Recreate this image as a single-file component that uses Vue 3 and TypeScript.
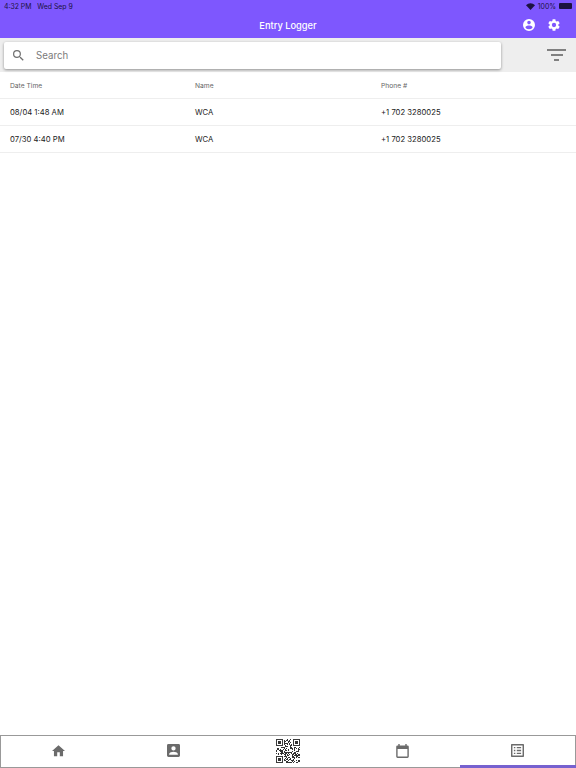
<script setup lang="ts">
interface Entry {
  time: string;
  name: string;
  phone: string;
}

const entries: Entry[] = [
  { time: "08/04 1:48 AM", name: "WCA", phone: "+1 702 3280025" },
  { time: "07/30 4:40 PM", name: "WCA", phone: "+1 702 3280025" },
];

// pseudo random modules, the real code is too blurry to read anyway
const qrSize = 25;
const qrCells: { x: number; y: number }[] = [];
let seed = 7;
for (let y = 0; y < qrSize; y++) {
  for (let x = 0; x < qrSize; x++) {
    seed = (seed * 137 + 59) % 1009;
    const inFinder = (x < 8 && y < 8) || (x > 16 && y < 8) || (x < 8 && y > 16);
    if (!inFinder && seed % 2 === 0) qrCells.push({ x, y });
  }
}
const finders = [
  [0, 0],
  [18, 0],
  [0, 18],
];
</script>

<template>
  <div class="page">
    <div class="top">
      <div class="status">
        <span>4:32 PM&nbsp;&nbsp; Wed Sep 9</span>
        <div class="status-right">
          <svg width="9" height="7" viewBox="0 0 18 14">
            <path d="M9 14 0 4.500C5-1 13-1 18 4.500z" fill="#1c1240" />
          </svg>
          <span>100%</span>
          <span class="battery"></span>
        </div>
      </div>
      <div class="appbar">
        <span class="title">Entry Logger</span>
        <div class="actions">
          <svg width="12" height="12" viewBox="2 2 20 20">
            <path
              fill="#fff"
              d="M12 2a10 10 0 1 0 0 20 10 10 0 0 0 0-20zm0 3a3 3 0 1 1 0 6 3 3 0 0 1 0-6zm0 14.200a7.200 7.200 0 0 1-6-3.220c.03-1.990 4-3.080 6-3.080s5.970 1.090 6 3.080a7.200 7.200 0 0 1-6 3.220z"
            />
          </svg>
          <svg width="12" height="12" viewBox="2 2 20 20">
            <path
              fill="#fff"
              d="M19.140 12.940c.04-.3.060-.61.060-.94s-.02-.64-.07-.94l2.030-1.580a.49.49 0 0 0 .12-.61l-1.920-3.320a.49.49 0 0 0-.59-.22l-2.390.96a7 7 0 0 0-1.620-.94l-.36-2.540a.48.48 0 0 0-.48-.41h-3.840a.47.470 0 0 0-.47.41l-.36 2.540c-.59.24-1.130.57-1.620.94l-2.390-.96a.48.48 0 0 0-.59.22L2.740 8.870a.47.47 0 0 0 .12.61l2.030 1.580c-.05.3-.09.63-.09.94s.02.64.07.94l-2.030 1.580a.49.49 0 0 0-.12.61l1.920 3.320c.12.22.37.29.59.22l2.390-.96c.5.380 1.030.7 1.620.94l.36 2.540c.05.24.24.41.48.41h3.840c.24 0 .44-.17.47-.41l.36-2.540a7 7 0 0 0 1.620-.94l2.390.96c.22.08.47 0 .59-.22l1.920-3.320a.47.47 0 0 0-.12-.61zM12 15.600a3.600 3.600 0 1 1 0-7.200 3.600 3.600 0 0 1 0 7.200z"
            />
          </svg>
        </div>
      </div>
    </div>

    <div class="search-band">
      <div class="search">
        <svg class="search-icon" width="11" height="11" viewBox="3 3 18 18">
          <path
            fill="#6f6f6f"
            d="M15.500 14h-.79l-.28-.27A6.470 6.470 0 0 0 16 9.500 6.500 6.500 0 1 0 9.500 16c1.610 0 3.090-.59 4.230-1.570l.27.28v.79l5 4.990L20.490 19l-4.990-5zm-6 0a4.500 4.500 0 1 1 0-9 4.500 4.500 0 0 1 0 9z"
          />
        </svg>
        <span class="placeholder">Search</span>
      </div>
      <div class="filter">
        <span class="bar bar-1"></span>
        <span class="bar bar-2"></span>
        <span class="bar bar-3"></span>
      </div>
    </div>

    <div class="table">
      <div class="row head">
        <span>Date Time</span>
        <span>Name</span>
        <span>Phone #</span>
      </div>
      <div v-for="entry in entries" :key="entry.time" class="row item">
        <span>{{ entry.time }}</span>
        <span>{{ entry.name }}</span>
        <span>{{ entry.phone }}</span>
      </div>
    </div>

    <nav class="tabs">
      <div class="tab">
        <svg width="13" height="12" viewBox="2 3 20 18">
          <path fill="#6b6b6b" d="M10 20v-6h4v6h5v-8h3L12 3 2 12h3v8z" />
        </svg>
      </div>
      <div class="tab">
        <svg width="13" height="13" viewBox="3 3 18 18">
          <path
            fill="#6b6b6b"
            d="M3 5v14a2 2 0 0 0 2 2h14a2 2 0 0 0 2-2V5a2 2 0 0 0-2-2H5a2 2 0 0 0-2 2zm12 4a3 3 0 1 1-6 0 3 3 0 0 1 6 0zm-9 8c0-2 4-3.100 6-3.100s6 1.100 6 3.100v1H6z"
          />
        </svg>
      </div>
      <div class="tab">
        <svg class="qr" width="24" height="24" viewBox="0 0 25 25" shape-rendering="crispEdges">
          <rect v-for="c in qrCells" :key="`${c.x}-${c.y}`" :x="c.x" :y="c.y" width="1" height="1" fill="#333" />
          <g v-for="f in finders" :key="f.join()">
            <rect :x="f[0] + 0.5" :y="f[1] + 0.500" width="6" height="6" fill="none" stroke="#333" />
            <rect :x="f[0] + 2" :y="f[1] + 2" width="3" height="3" fill="#333" />
          </g>
        </svg>
      </div>
      <div class="tab">
        <svg width="13" height="14" viewBox="3 2 18 20">
          <path
            fill="#6b6b6b"
            d="M19 4h-1V2h-2v2H8V2H6v2H5a2 2 0 0 0-2 2v14a2 2 0 0 0 2 2h14a2 2 0 0 0 2-2V6a2 2 0 0 0-2-2zm0 16H5V9h14v11z"
          />
        </svg>
      </div>
      <div class="tab active">
        <svg width="13" height="13" viewBox="3 3 18 18">
          <path
            fill="#6b6b6b"
            d="M19 5v14H5V5h14m1-2H4a1 1 0 0 0-1 1v16a1 1 0 0 0 1 1h16a1 1 0 0 0 1-1V4a1 1 0 0 0-1-1zM11 7h6v2h-6V7zm0 4h6v2h-6v-2zm0 4h6v2h-6v-2zM7 7h2v2H7V7zm0 4h2v2H7v-2zm0 4h2v2H7v-2z"
          />
        </svg>
      </div>
    </nav>
  </div>
</template>

<style scoped>
.page {
  width: 576px;
  height: 768px;
  display: flex;
  flex-direction: column;
  background: #fff;
  font-family: Inter, "Liberation Sans", sans-serif;
  overflow: hidden;
}

.top {
  height: 38px;
  background: #7e57fe;
  flex-shrink: 0;
}

.status {
  height: 12px;
  padding: 0 4px;
  display: flex;
  justify-content: space-between;
  align-items: center;
  font-size: 6.900px;
  color: #1c1240;
}

.status-right {
  display: flex;
  align-items: center;
  gap: 3px;
}

.battery {
  width: 13px;
  height: 6px;
  border-radius: 1px;
  background: #1c1240;
}

.appbar {
  position: relative;
  height: 26px;
  display: flex;
  align-items: center;
  justify-content: center;
}

.title {
  color: #fff;
  font-size: 9.300px;
  font-weight: 500;
}

.actions {
  position: absolute;
  right: 16px;
  top: 7px;
  display: flex;
  gap: 13px;
}

.search-band {
  height: 34px;
  flex-shrink: 0;
  background: #eeeeee;
  display: flex;
  padding: 4px 0 3px 4px;
}

.search {
  width: 497px;
  display: flex;
  align-items: center;
  padding-left: 8px;
  background: #fff;
  border-radius: 2px;
  box-shadow: 0 1px 3px rgba(0, 0, 0, 0.4);
}

.search-icon {
  margin-top: -1px;
  margin-left: 1px;
}

.placeholder {
  margin-left: 12px;
  font-size: 9.700px;
  color: #7a7a7a;
}

.filter {
  flex: 1;
  display: flex;
  flex-direction: column;
  align-items: center;
  gap: 3px;
  padding: 7px 0 0 36px;
}

.bar {
  height: 2px;
  background: #808080;
}

.bar-1 {
  width: 19px;
}

.bar-2 {
  width: 12px;
}

.bar-3 {
  width: 5px;
}

.table {
  flex: 1;
}

.row {
  display: grid;
  grid-template-columns: 185px 186px 1fr;
  align-items: center;
  height: 27px;
  padding-left: 10px;
  border-bottom: 1px solid #eeeeee;
}

.head {
  padding-top: 2px;
  font-size: 6.700px;
  color: #666;
}

.item {
  font-size: 7.700px;
  color: #222;
}

.tabs {
  height: 33px;
  flex-shrink: 0;
  display: grid;
  grid-template-columns: repeat(5, 1fr);
  border: 1px solid #999;
  background: #fff;
}

.tab {
  position: relative;
  display: flex;
  align-items: center;
  justify-content: center;
  padding-bottom: 2px;
}

.qr {
  filter: blur(0.5px);
}

.active::after {
  content: "";
  position: absolute;
  left: 0;
  right: -1px;
  bottom: -1px;
  height: 3px;
  background: #7661cf;
}
</style>

<style>
body {
  margin: 0;
}

* {
  box-sizing: border-box;
}
</style>
